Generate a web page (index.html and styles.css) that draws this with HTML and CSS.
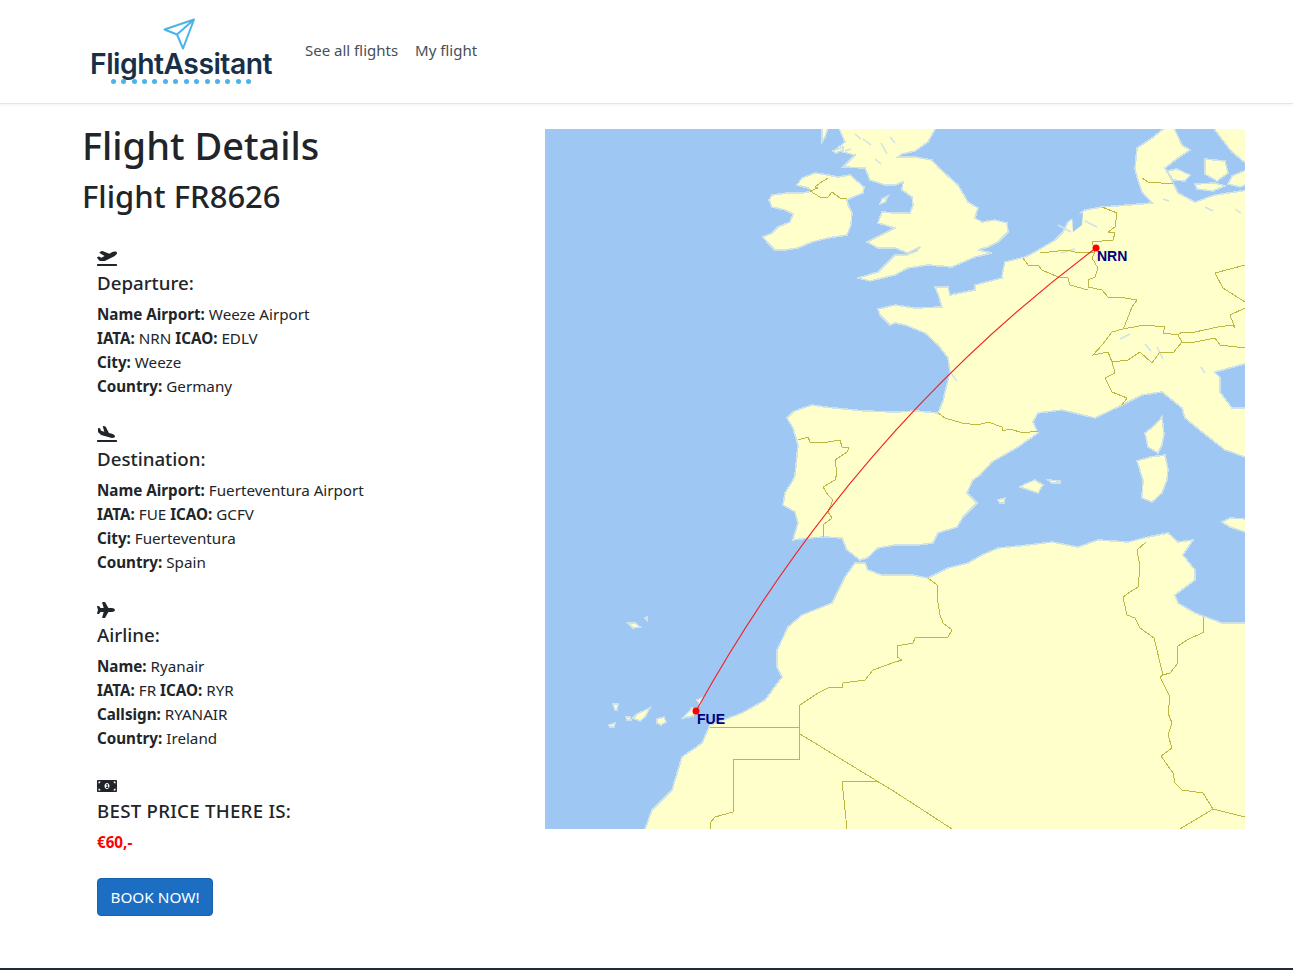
FILE: index.html
```html
<!DOCTYPE html>
<html lang="en">
<head>
<meta charset="utf-8">
<title>Flight Details</title>
<link rel="stylesheet" href="styles.css">
</head>
<body>
<header class="navbar">
  <a class="brand" href="#">
    <svg class="brand-plane" viewBox="0 0 34 32" width="34" height="32"><path d="M31 1.500 1.500 11.500 14 16.500 20 30.500ZM14 16.500 31 1.500"/></svg>
    <span class="brand-name">FlightAssitant</span>
    <span class="brand-dots"><i></i><i></i><i></i><i></i><i></i><i></i><i></i><i></i><i></i><i></i><i></i><i></i><i></i><i></i></span>
  </a>
  <nav class="nav-links">
    <a href="#">See all flights</a>
    <a href="#">My flight</a>
  </nav>
</header>
<main class="page">
  <div class="details">
    <h1>Flight Details</h1>
    <h2>Flight FR8626</h2>
    <section class="block">
      <div class="icon-line"><svg class="icon" viewBox="0 0 640 512"><path d="M624 448H16c-8.840 0-16 7.160-16 16v32c0 8.840 7.160 16 16 16h608c8.840 0 16-7.160 16-16v-32c0-8.840-7.160-16-16-16zM80.550 341.270c6.280 6.840 15.100 10.720 24.330 10.710l130.540-.18a65.620 65.620 0 0 0 29.640-7.120l290.960-147.650c26.740-13.570 50.710-32.940 67.020-58.310 18.310-28.480 20.300-49.090 13.070-63.650-7.210-14.570-24.740-25.270-58.250-27.450-29.850-1.940-59.540 5.920-86.280 19.480l-98.510 49.990-218.700-82.060a17.799 17.799 0 0 0-18-1.110L90.620 67.290c-10.670 5.410-13.250 19.650-5.170 28.530l156.220 98.100-103.210 52.380-72.350-36.470a17.804 17.804 0 0 0-16.070.02L9.910 230.220c-10.440 5.300-13.190 19.120-5.570 28.080l76.210 82.970z"/></svg></div>
      <h5>Departure:</h5>
      <p><b>Name Airport:</b> Weeze Airport</p>
      <p><b>IATA:</b> NRN <b>ICAO:</b> EDLV</p>
      <p><b>City:</b> Weeze</p>
      <p><b>Country:</b> Germany</p>
    </section>
    <section class="block">
      <div class="icon-line"><svg class="icon" viewBox="0 0 640 512"><path d="M624 448H16c-8.840 0-16 7.160-16 16v32c0 8.840 7.160 16 16 16h608c8.840 0 16-7.160 16-16v-32c0-8.840-7.160-16-16-16zM44.810 205.660l88.740 80a62.607 62.607 0 0 0 25.470 13.930l287.600 78.350c26.480 7.210 54.560 8.720 81 1.360 29.670-8.270 43.440-21.210 47.250-35.710 3.830-14.500-1.730-32.710-23.370-54.960-19.280-19.820-44.350-32.790-70.830-40l-97.510-26.560L282.800 30.220c-1.510-5.810-5.950-10.350-11.660-11.910L206.050.58c-10.560-2.880-20.900 5.320-20.710 16.440l47.920 164.210-102.200-27.840-27.590-67.880c-1.930-4.890-6.010-8.570-11.020-9.930L52.720 64.750c-10.340-2.820-20.530 5-20.720 15.880l.23 101.780c.19 8.910 6.030 17.340 12.580 23.250z"/></svg></div>
      <h5>Destination:</h5>
      <p><b>Name Airport:</b> Fuerteventura Airport</p>
      <p><b>IATA:</b> FUE <b>ICAO:</b> GCFV</p>
      <p><b>City:</b> Fuerteventura</p>
      <p><b>Country:</b> Spain</p>
    </section>
    <section class="block">
      <div class="icon-line"><svg class="icon" viewBox="0 0 576 512"><path d="M480 192H365.710L260.610 8.060A16.014 16.014 0 0 0 246.710 0h-65.500c-10.630 0-18.300 10.170-15.380 20.390L214.860 192H112l-43.200-57.600c-3.020-4.030-7.770-6.400-12.800-6.400H16.010C5.600 128-2.040 137.780.49 147.880L32 256 .49 364.120C-2.040 374.220 5.600 384 16.010 384H56c5.040 0 9.780-2.370 12.800-6.400L112 320h102.860l-49.030 171.600c-2.920 10.220 4.750 20.400 15.380 20.400h65.500c5.740 0 11.040-3.080 13.890-8.060L365.710 320H480c35.350 0 96-28.650 96-64s-60.650-64-96-64z"/></svg></div>
      <h5>Airline:</h5>
      <p><b>Name:</b> Ryanair</p>
      <p><b>IATA:</b> FR <b>ICAO:</b> RYR</p>
      <p><b>Callsign:</b> RYANAIR</p>
      <p><b>Country:</b> Ireland</p>
    </section>
    <section class="block">
      <div class="icon-line"><svg class="icon" viewBox="0 0 640 512"><path fill-rule="evenodd" d="M608 64H32C14.330 64 0 78.330 0 96v320c0 17.670 14.330 32 32 32h576c17.670 0 32-14.330 32-32V96c0-17.670-14.330-32-32-32zM48 400v-64c35.350 0 64 28.650 64 64H48zm0-224v-64h64c0 35.350-28.650 64-64 64zm272 176c-44.190 0-80-42.990-80-96 0-53.020 35.820-96 80-96s80 42.980 80 96c0 53.030-35.830 96-80 96zm272 48h-64c0-35.350 28.650-64 64-64v64zm0-224c-35.350 0-64-28.650-64-64h64v64z"/><path d="M360 288h-16v-88c0-4.420-3.580-8-8-8h-13.580c-4.740 0-9.370 1.400-13.310 4.030l-15.330 10.220a7.990 7.990 0 0 0-2.220 11.090l8.880 13.310a7.990 7.990 0 0 0 11.090 2.220l.47-.31V288h-16c-4.420 0-8 3.580-8 8v16c0 4.420 3.580 8 8 8h64c4.420 0 8-3.580 8-8v-16c0-4.420-3.580-8-8-8z"/></svg></div>
      <h5 class="caps">BEST PRICE THERE IS:</h5>
      <p class="price">€60,-</p>
      <button class="book" type="button">BOOK NOW!</button>
    </section>
  </div>
  <div class="map-col">
    <svg class="map" viewBox="0 0 700 700" width="700" height="700">
      <rect class="sea" width="700" height="700"/>
      <g class="land">
        <path d="M242 289 248 283 255 280 267 276 280 278 290 279 320 282 350 283 372 282 393 284 398 272 400 263 405 243 403 229 393 216 380 204 360 196 350 194 345 196 335 186 333 180 350 176 370 179 397 178 393 165 390 158 403 158 405 166 430 161 430 156 457 149 458 141 460 133 480 128 490 123 510 111 518 103 523 93 540 81 557 78 583 76 607 74 597 63 593 51 590 40 592 19 607 9 622 -3 628 -3 637 16 645 21 633 29 620 39 628 54 633 64 650 73 670 66 703 61 703 234 670 243 675 249 675 263 687 279 703 279 703 329 680 321 657 303 640 289 637 279 617 263 597 266 577 276 550 289 517 281 493 284 488 293 493 304 473 318 447 333 435 346 428 351 422 364 432 374 418 388 412 398 393 404 388 414 373 416 350 416 333 419 322 429 315 431 302 421 297 409 280 408 263 409 248 411 253 394 250 383 238 376 240 364 248 351 250 346 253 316 248 299Z"/>
        <path d="M310 434 320 434 323 441 337 446 350 446 367 446 383 449 403 439 423 434 437 426 453 419 483 416 507 413 533 418 553 411 583 413 603 408 623 404 633 413 648 411 638 426 650 441 650 451 630 466 633 474 650 484 677 494 703 494 703 703 99 703 107 681 127 661 137 628 157 614 165 596 197 584 220 571 237 548 232 538 232 521 243 498 257 486 287 474 300 448Z"/>
        <path d="M218 108 222 113 230 121 240 121 253 119 267 113 283 109 302 106 306 96 307 84 303 76 302 71 308 68 318 64 319 58 313 53 305 46 293 48 283 46 270 44 257 49 252 56 263 59 267 62 258 64 243 64 227 66 224 71 227 78 240 81 248 85 245 93 233 98 227 104Z"/>
        <path d="M293 -3 300 13 290 21 310 26 298 38 320 39 325 51 340 56 350 56 358 53 357 61 367 68 368 76 365 84 350 84 337 83 333 94 350 99 322 113 333 119 350 119 363 124 375 118 372 122 362 126 350 126 333 143 313 149 325 152 350 146 363 139 383 136 407 138 430 128 447 124 433 121 443 118 453 113 463 103 462 94 450 91 437 93 430 89 433 79 423 73 413 56 393 38 387 31 370 28 353 28 357 25 370 22 383 13 392 -3Z"/>
        <path d="M337 70 343 67 340 73 335 75Z"/>
        <path d="M277 -1 283 -1 280 8 277 13Z"/>
        <path d="M288 22 298 18 298 21 291 24Z"/>
        <path d="M667 -3 673 5 683 18 687 23 703 36 703 -3Z"/>
        <path d="M703 40 687 47 683 55 695 58 703 55Z"/>
        <path d="M622 42 632 40 645 46 640 52 628 51Z"/>
        <path d="M660 30 680 32 683 44 672 52 660 45Z"/>
        <path d="M650 55 670 54 680 57 668 62 652 60Z"/>
        <path d="M592 332 605 328 620 326 623 340 622 351 617 364 607 373 597 369 598 351Z"/>
        <path d="M617 288 619 305 617 316 613 324 603 318 600 304 610 296Z"/>
        <path d="M475 358 480 355 490 351 498 356 493 364Z"/>
        <path d="M503 351 515 352 515 354 507 354Z"/>
        <path d="M453 371 460 369 459 374 455 374Z"/>
        <path d="M677 393 685 389 703 390 703 404 685 398Z"/>
        <path d="M83 494 90 494 95 498 88 499Z"/>
        <path d="M100 489 102 488 102 491Z"/>
        <path d="M68 575 73 575 72 581 70 581Z"/>
        <path d="M88 589 92 585 105 579 100 588 95 592Z"/>
        <path d="M81 588 85 588 86 591 82 591Z"/>
        <path d="M112 590 119 588 121 593 116 596 112 594Z"/>
        <path d="M64 596 70 594 69 598 65 598Z"/>
        <path d="M138 589 147 579 153 581 148 587Z"/>
        <path d="M152 571 157 569 155 576Z"/>
      </g>
      <path class="water" d="M527 86 538 84 537 96 528 103Z"/>
      <g class="lakes">
        <path d="M300 22 306 20M318 10 326 16M336 14 342 25M330 30 336 35M310 5 316 10M345 8 350 14"/>
        <path d="M513 96 526 103M540 92 552 98M516 124 530 120"/>
        <path d="M575 210 585 205M600 215 606 222M612 218 618 230M656 238 660 244"/>
        <path d="M405 243 412 252M618 70 624 72M660 78 668 82M690 80 696 84"/>
      </g>
      <g class="borders">
        <path d="M283 49 275 54 270 58 273 59 265 62 275 68 283 68 287 63 295 69 302 69"/>
        <path d="M253 311 263 308 265 313 277 314 295 311 297 318 304 319 302 323 290 331 292 344 290 351 278 358 283 366 288 371 283 383 287 389 278 396 278 408"/>
        <path d="M393 284 400 289 417 294 433 296 443 293 457 298 458 302 465 300 478 304 493 302"/>
        <path d="M557 78 572 84 570 98 563 103 570 104 568 111 547 113 550 123 547 129 553 139 550 148 543 151 543 158 557 161 563 168 580 169 592 171 587 178 580 196 578 200 600 196 620 198 618 204 633 206 637 203 650 203 673 198 687 196 690 199 685 186 700 179"/>
        <path d="M495 124 513 122 523 121 533 124 550 123"/>
        <path d="M478 129 483 136 493 136 497 141 513 148 523 149 525 156 543 161"/>
        <path d="M578 200 567 203 557 216 548 226 563 223 567 233 583 231 595 223 607 234 615 223 628 224 637 213 633 206"/>
        <path d="M637 213 650 213 670 209 675 216 700 219"/>
        <path d="M567 233 570 244 560 249 567 263 582 269 577 276"/>
        <path d="M700 136 670 144 678 159 700 173"/>
        <path d="M597 49 603 53 628 55"/>
        <path d="M383 449 392 456 393 474 395 486 398 494 407 501 403 508 370 509 368 514 352 517 352 528 357 531 350 533 328 541 320 551 298 554 297 559 285 558 273 564 255 576 254 598 165 598"/>
        <path d="M254 598 254 630 188 630 188 683 170 688 165 694 166 700"/>
        <path d="M255 605 350 663 407 700"/>
        <path d="M297 652 332 652M297 652 302 700"/>
        <path d="M601 413 592 421 595 438 593 458 585 463 578 468 582 486 590 489 595 499 609 509 618 546"/>
        <path d="M658 488 659 503 642 511 633 517 632 523 633 534 625 544 618 546 615 548 625 568 623 584 627 594 623 606 627 619 616 627 628 644 630 654 637 661 658 664 668 680 700 688M668 680 635 700"/>
      </g>
      <path class="route" d="M151 582Q307 301.500 551 119"/>
      <circle class="airport" cx="551" cy="119" r="3.500"/>
      <circle class="airport" cx="151" cy="582" r="3.500"/>
      <text class="code" x="552" y="132">NRN</text>
      <text class="code" x="152" y="595">FUE</text>
    </svg>
  </div>
</main>
<footer class="foot"></footer>
</body>
</html>
```
FILE: styles.css
```css
* { box-sizing: border-box; }
html, body { margin: 0; height: 970px; overflow: hidden; }
body { font-family: "Noto Sans", "Open Sans", sans-serif; font-size: 15.200px; line-height: 24px; color: #212529; background: #fff; display: flex; flex-direction: column; }
.navbar { height: 104px; flex: none; display: flex; align-items: center; padding-left: 90px; border-bottom: 1px solid #e5e5e5; box-shadow: 0 1px 3px rgba(0,0,0,.05); }
.brand { display: flex; flex-direction: column; align-items: center; width: 182px; text-decoration: none; margin-top: -2px; }
.brand-plane { display: block; fill: none; stroke: #4ab3ea; stroke-width: 2; stroke-linejoin: round; margin-right: 3px; }
.brand-name { font-family: Inter, "Noto Sans", sans-serif; font-weight: 600; font-size: 28.300px; line-height: 30px; color: #17304a; letter-spacing: -.5px; white-space: nowrap; margin-top: -1px; }
.brand-dots { display: flex; gap: 5.450px; }
.brand-dots i { width: 5px; height: 5px; border-radius: 50%; background: #4ab3ea; }
.nav-links { display: flex; gap: 17px; margin-left: 33px; font-size: 15px; margin-top: -4px; }
.nav-links a { color: #454f59; text-decoration: none; }
.page { flex: 1; display: flex; padding: 17px 0 0 82px; }
.details { width: 463px; flex: none; }
h1 { font-size: 38px; line-height: 48px; font-weight: 500; margin: 0 0 8px; }
h2 { font-size: 31px; line-height: 38px; font-weight: 500; margin: 0 0 32px; }
.block { padding-left: 15px; margin-bottom: 25px; }
.icon-line { height: 24px; display: flex; align-items: center; padding-bottom: 2px; }
.icon { height: 16px; display: block; fill: #212529; }
h5 { font-size: 18.700px; line-height: 24px; font-weight: 500; margin: 0 0 7px; }
.caps { letter-spacing: .25px; }
p { margin: 0; }
b { font-weight: 700; }
.price { color: #f00; font-weight: 700; margin-bottom: 24px; }
.book { display: block; height: 38px; width: 116px; padding: 0; background: #1b6ec2; border: 1px solid #1861ac; border-radius: 4px; color: #fff; font: inherit; font-size: 15.300px; }
.map-col { padding-top: 8px; }
.map { display: block; }
.sea { fill: #9ec7f3; }
.land path { fill: #ffffcc; stroke: #cfe3e6; stroke-width: 1.600; shape-rendering: crispEdges; }
.water { fill: #9ec7f3; }
.lakes path { fill: none; stroke: #cfe3e6; stroke-width: 1.500; }
.borders path { fill: none; stroke: #bdb842; stroke-width: 1; shape-rendering: crispEdges; }
.route { fill: none; stroke: #f52020; stroke-width: 1.100; }
.airport { fill: #f00; }
.code { font-family: "Liberation Sans", Arial, sans-serif; font-weight: 700; font-size: 14px; fill: #000080; }
.foot { height: 2px; flex: none; background: #212a35; }
```
